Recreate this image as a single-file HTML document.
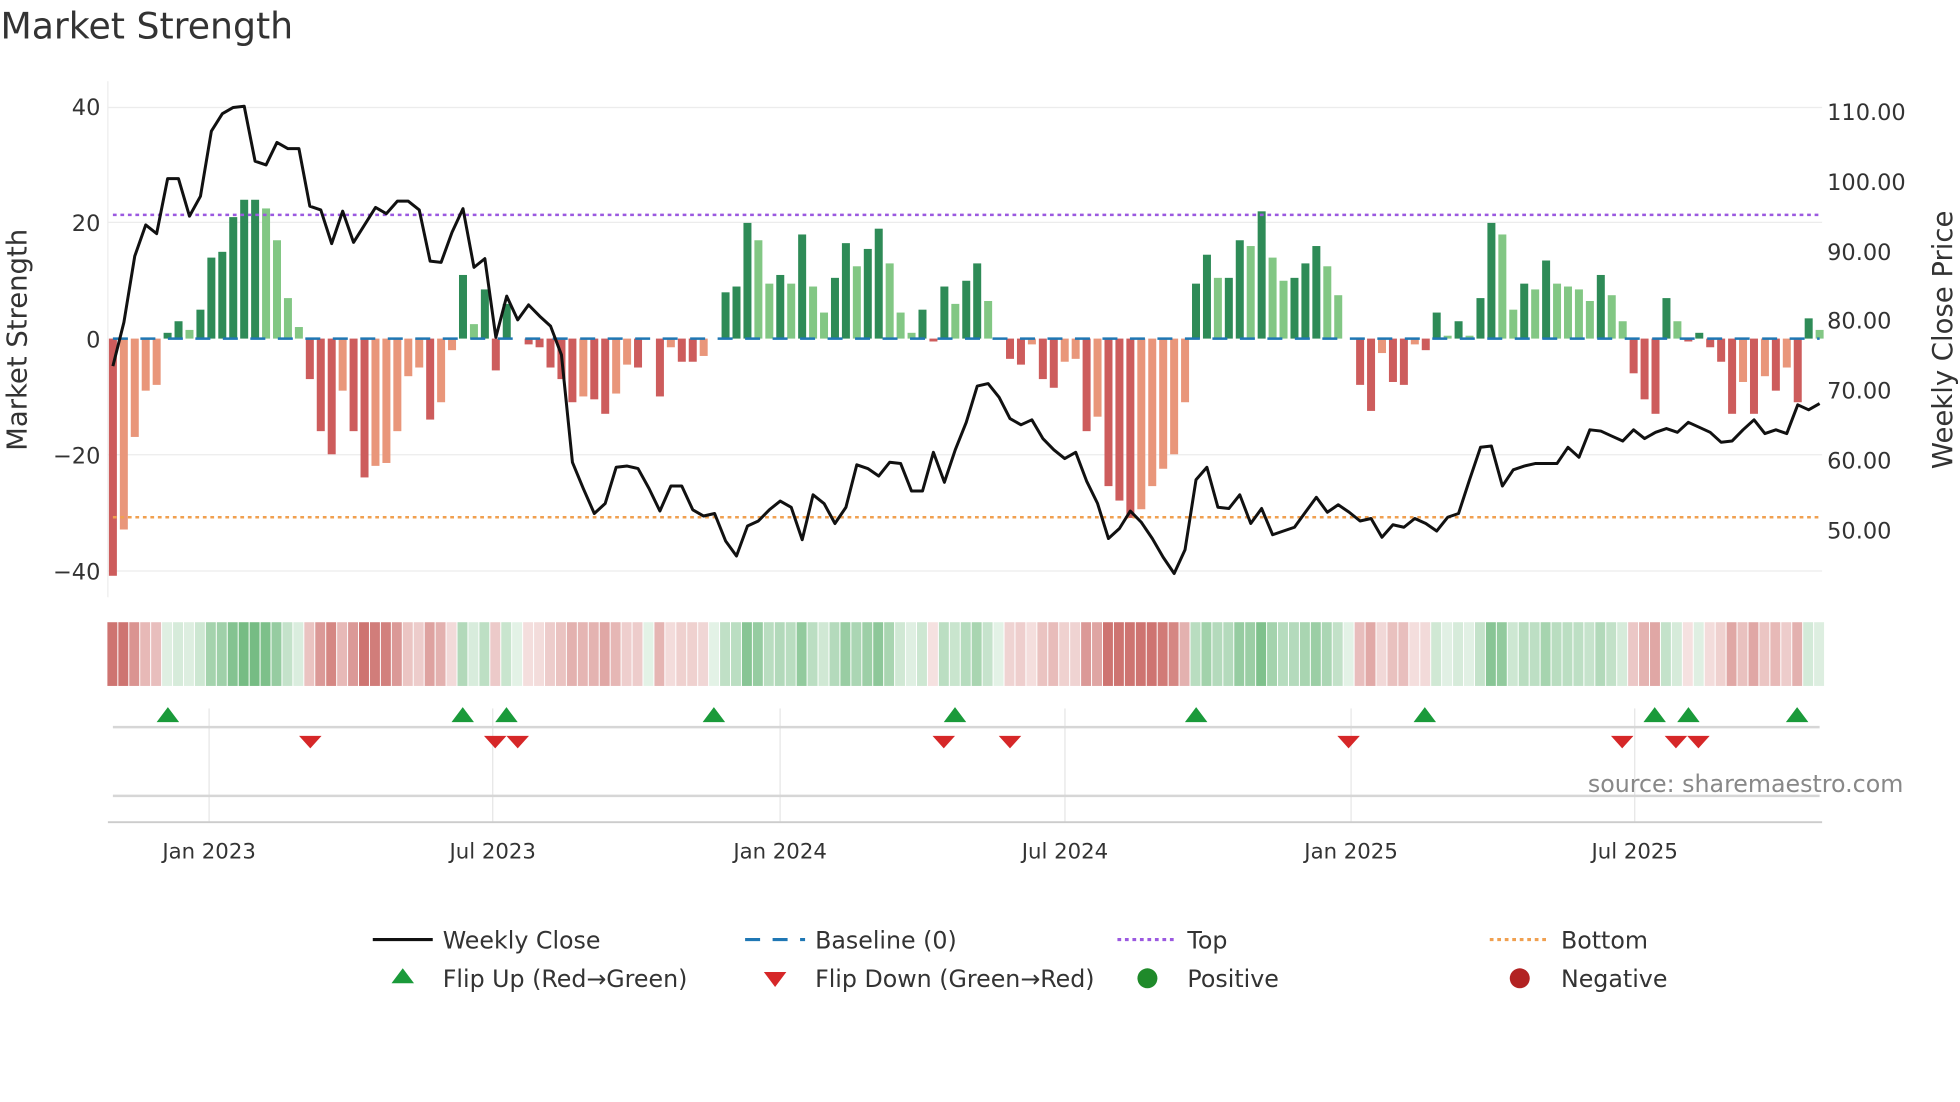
<!DOCTYPE html>
<html><head><meta charset="utf-8"><style>
html,body{margin:0;padding:0;background:#fff;}
svg{display:block;font-family:"DejaVu Sans","Liberation Sans",sans-serif;}
</style></head><body>
<svg id="c" width="1960" height="1102" viewBox="0 0 1568 882" xmlns="http://www.w3.org/2000/svg">
<rect width="1568" height="882" fill="#fff"/>
<text x="0" y="31" font-size="29" fill="#333">Market Strength</text>
<g stroke="#ececec" stroke-width="1">
<line x1="86" x2="1458" y1="86" y2="86"/><line x1="86" x2="1458" y1="178" y2="178"/>
<line x1="86" x2="1458" y1="364" y2="364"/><line x1="86" x2="1458" y1="457" y2="457"/>
<line x1="86" x2="86" y1="65" y2="478"/>
</g>
<g font-size="18" fill="#333" text-anchor="end">
<text x="80" y="92">40</text><text x="80" y="185">20</text><text x="80" y="278">0</text>
<text x="80" y="371">−20</text><text x="80" y="464">−40</text>
</g>
<g font-size="18" fill="#333">
<text x="1462" y="96">110.00</text><text x="1462" y="152">100.00</text><text x="1462" y="208">90.00</text>
<text x="1462" y="263">80.00</text><text x="1462" y="319">70.00</text><text x="1462" y="375">60.00</text><text x="1462" y="431">50.00</text>
</g>
<text transform="translate(21,272) rotate(-90)" font-size="22" fill="#333" text-anchor="middle">Market Strength</text>
<text transform="translate(1562,272) rotate(-90)" font-size="22" fill="#333" text-anchor="middle">Weekly Close Price</text>
<g id="bars"></g>
<g id="heat"></g>
<line x1="90" x2="1456" y1="271" y2="271" stroke="#1f77b4" stroke-width="2" stroke-dasharray="12,10"/>
<line x1="90" x2="1456" y1="172" y2="172" stroke="#9b59e0" stroke-width="2" stroke-dasharray="3,3"/>
<line x1="90" x2="1456" y1="414" y2="414" stroke="#f0a050" stroke-width="2" stroke-dasharray="3,3"/>
<polyline id="price" fill="none" stroke="#111" stroke-width="2.4" stroke-linejoin="round"/>
<g stroke="#e6e6e6" stroke-width="1" id="vg"></g>
<line x1="90" x2="1456" y1="582" y2="582" stroke="#d6d6d6" stroke-width="2"/>
<line x1="90" x2="1456" y1="637" y2="637" stroke="#d6d6d6" stroke-width="2"/>
<line x1="86" x2="1458" y1="658" y2="658" stroke="#ccc" stroke-width="1.5"/>
<g id="flips"></g>
<text x="1523" y="634" font-size="19" fill="#888" text-anchor="end">source: sharemaestro.com</text>
<g font-size="17" fill="#333" text-anchor="middle">
<text x="167" y="687">Jan 2023</text><text x="394" y="687">Jul 2023</text><text x="624" y="687">Jan 2024</text>
<text x="852" y="687">Jul 2024</text><text x="1081" y="687">Jan 2025</text><text x="1308" y="687">Jul 2025</text>
</g>
<g font-size="19" fill="#333">
<line x1="298" x2="346" y1="752" y2="752" stroke="#111" stroke-width="2.5"/><text x="354" y="759">Weekly Close</text>
<line x1="596" x2="644" y1="752" y2="752" stroke="#1f77b4" stroke-width="2.5" stroke-dasharray="12,10"/><text x="652" y="759">Baseline (0)</text>
<line x1="894" x2="942" y1="752" y2="752" stroke="#9b59e0" stroke-width="2.5" stroke-dasharray="3,3"/><text x="950" y="759">Top</text>
<line x1="1192" x2="1240" y1="752" y2="752" stroke="#f0a050" stroke-width="2.5" stroke-dasharray="3,3"/><text x="1249" y="759">Bottom</text>
<polygon points="322,775 313,787 331,787" fill="#1a9a3a"/><text x="354" y="790">Flip Up (Red→Green)</text>
<polygon points="611,778 629,778 620,790" fill="#d62728"/><text x="652" y="790">Flip Down (Green→Red)</text>
<circle cx="918" cy="783" r="8" fill="#1f8a2a"/><text x="950" y="790">Positive</text>
<circle cx="1216" cy="783" r="8" fill="#b22222"/><text x="1249" y="790">Negative</text>
</g>
</svg>
<script>
var V=[-41,-33,-17,-9,-8,1,3,1.5,5,14,15,21,24,24,22.5,17,7,2,-7,-16,-20,-9,-16,-24,-22,-21.5,-16,-6.5,-5,-14,-11,-2,11,2.5,8.5,-5.5,6,0,-1,-1.5,-5,-7,-11,-10,-10.5,-13,-9.5,-4.5,-5,0,-10,-1.5,-4,-4,-3,0,8,9,20,17,9.5,11,9.5,18,9,4.5,10.5,16.5,12.5,15.5,19,13,4.5,1,5,-0.5,9,6,10,13,6.5,0,-3.5,-4.5,-1,-7,-8.5,-4,-3.5,-16,-13.5,-25.5,-28,-31,-29.5,-25.5,-22.5,-20,-11,9.5,14.5,10.5,10.5,17,16,22,14,10,10.5,13,16,12.5,7.5,0,-8,-12.5,-2.5,-7.5,-8,-1,-2,4.5,0.5,3,0.5,7,20,18,5,9.5,8.5,13.5,9.5,9,8.5,6.5,11,7.5,3,-6,-10.5,-13,7,3,-0.5,1,-1.5,-4,-13,-7.5,-13,-6.5,-9,-5,-11,3.5,1.5];
var P=[293,258,205,180,187,143,143,173,157,105,91,86,85,129,132,114,119,119,165,168,195,169,194,180,166,171,161,161,168,209,210,186,167,214,207,270,237,256,244,253,261,284,370,391,411,403,374,373,375,391,409,389,389,408,413,411,433,445,421,417,408,401,406,432,396,403,419,406,372,375,381,370,371,393,393,362,386,360,338,309,307,318,335,340,336,351,360,367,362,385,403,431,423,409,418,431,446,459,440,384,374,406,407,396,419,407,428,425,422,410,398,410,404,410,417,415,430,420,422,415,419,425,414,411,384,358,357,389,376,373,371,371,371,358,366,344,345,349,353,344,351,346,343,346,338,342,346,354,353,344,336,347,344,347,324,328,323];
var n=V.length,x0=90,st=(1456-90)/(n-1),ns="http://www.w3.org/2000/svg";
function el(t,a,p){var e=document.createElementNS(ns,t);for(var k in a)e.setAttribute(k,a[k]);document.getElementById(p).appendChild(e);return e;}
for(var i=0;i<n;i++){var v=V[i],x=x0+i*st,pv=i?V[i-1]:0;var dark=Math.abs(v)>=Math.abs(pv)||(v*pv<0);
var col=v>=0?(dark?"#2e8b57":"#82c784"):(dark?"#cd5c5c":"#e9967a");
var y=271-v*4.63;if(v!==0)el("rect",{x:x-3.2,y:Math.min(y,271),width:6.4,height:Math.abs(v*4.63),fill:col},"bars");
var a=Math.min(1,0.2+Math.abs(v)/30);var hc=v>=0?"rgba(60,160,80,"+(a*0.7)+")":"rgba(190,70,65,"+(a*0.75)+")";
el("rect",{x:x-4.4,y:498,width:st+0.1,height:51,fill:"#fff"},"heat");el("rect",{x:x-4.4,y:498,width:st-0.8,height:51,fill:hc},"heat");}
var pts=[];for(var i=0;i<P.length;i++)pts.push((x0+i*st).toFixed(1)+","+P[i]);document.getElementById("price").setAttribute("points",pts.join(" "));
[167,394,624,852,1081,1308].forEach(function(x){el("line",{x1:x,x2:x,y1:567,y2:658},"vg");});
[134,370,405,571,764,957,1140,1324,1351,1438].forEach(function(x){el("polygon",{points:(x-9)+",578 "+(x+9)+",578 "+x+",566",fill:"#1a9a3a"},"flips");});
[248,396,414,755,808,1079,1298,1341,1359].forEach(function(x){el("polygon",{points:(x-9)+",589 "+(x+9)+",589 "+x+",599",fill:"#d62728"},"flips");});
</script>
</body></html>
